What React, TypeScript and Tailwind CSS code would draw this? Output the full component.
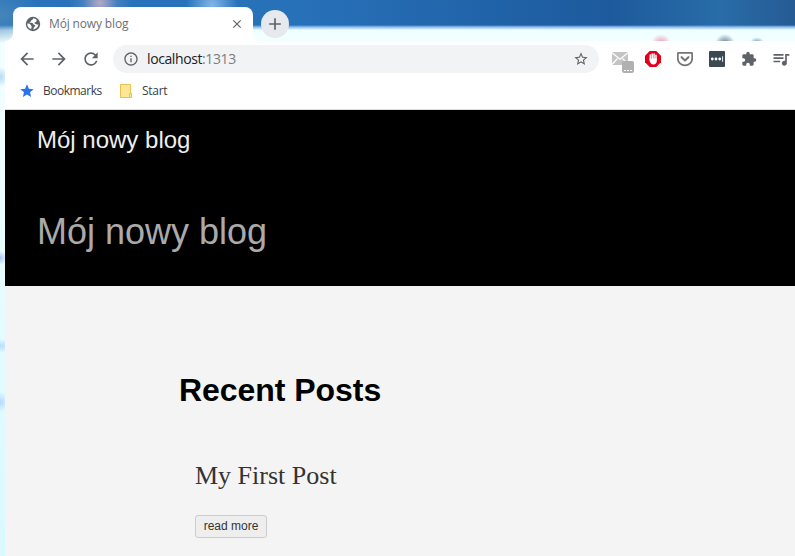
import React from "react";
import {
  MdAdd,
  MdArrowBack,
  MdArrowForward,
  MdClose,
  MdExtension,
  MdInfoOutline,
  MdMail,
  MdQueueMusic,
  MdRefresh,
  MdStar,
  MdStarBorder,
} from "react-icons/md";

function GlobeIcon() {
  return (
    <svg width="16" height="16" viewBox="0 0 16 16">
      <circle cx="8" cy="8" r="7.2" fill="#5f6368" />
      <path
        d="M8.6 2.3c-1 .5-.6 1.5-1.8 1.7-.6.1-.6 1-.9 1.4-.4.6-1.3.3-1.3.9 0 .8 1.5.4 2.7.6 1.1.2.8 1.6 1.9 1.8.9.2 1.3.6 1 1.3-.3.9-1.2.8-1.5 1.9-.2.7-.3 1.3-1 1.5A5.6 5.6 0 0 0 13.5 8.6c-1 0-1.3.2-2.1-.4-.7-.5-1.8-.2-1.9-1.2-.1-.9 1.1-.9 1.7-1.3.5-.4.5-1.200.2-2.100a5.600 5.600 0 0 0-2.800-1.300z"
        fill="#fff"
      />
      <path d="M2.3 7.6c1.400.100 3.100.300 3.400 1.500.2.900 1.100 1 1 1.900-.100.800-.600.900-.600 2.300A5.600 5.600 0 0 1 2.300 7.600z" fill="#fff" />
    </svg>
  );
}

function TabStrip() {
  return (
    <div className="flex h-[41px] items-end pl-2">
      <div className="relative flex h-[34px] w-[240px] items-center rounded-t-lg bg-white pl-3 pr-[9px]">
        <svg className="absolute -left-2 bottom-0" width="8" height="8" viewBox="0 0 8 8">
          <path d="M8 0v8H0a8 8 0 0 0 8-8z" fill="#fff" />
        </svg>
        <svg className="absolute -right-2 bottom-0" width="8" height="8" viewBox="0 0 8 8">
          <path d="M0 0v8h8a8 8 0 0 1-8-8z" fill="#fff" />
        </svg>
        <GlobeIcon />
        <span className="ml-2 whitespace-nowrap text-[12px] leading-4 tracking-[-0.15px] text-[#6d7074]">
          Mój nowy blog
        </span>
        <MdClose className="ml-auto size-[14px] text-[#5f6368]" />
      </div>
      <div className="mb-[3px] ml-2 flex size-7 items-center justify-center rounded-full bg-[#e6e9ed]">
        <MdAdd className="size-5 text-[#5f6368]" />
      </div>
    </div>
  );
}

function MailIcon() {
  return (
    <div className="relative size-6">
      <svg className="absolute -left-px top-[5px]" width="16" height="13" viewBox="0 0 16 13">
        <rect width="16" height="13" rx=".5" fill="#c4c4c4" />
        <path d="M0 .8 8 7.200l8-6.400M0 12.500l5.500-6M16 12.500l-5.500-6" fill="none" stroke="#fff" strokeWidth="1.200" />
      </svg>
      <div className="absolute left-[9px] top-[14px] flex h-3 w-3 items-end justify-center rounded-[2px] bg-[#b0b0b0] pb-[2px]">
        <div className="flex gap-px">
          <i className="h-px w-[2px] bg-white" />
          <i className="h-px w-[2px] bg-white" />
          <i className="h-px w-[2px] bg-white" />
        </div>
      </div>
    </div>
  );
}

function Toolbar() {
  return (
    <div className="flex h-9 items-center bg-white pl-3 text-[#5f6368]">
      <MdArrowBack className="size-5" />
      <MdArrowForward className="ml-3 size-5" />
      <MdRefresh className="ml-3 size-5" />
      <div className="ml-3 flex h-7 w-[486px] items-center rounded-full bg-[#f1f3f4] pl-[10px] pr-[10px]">
        <MdInfoOutline className="size-4" />
        <span className="ml-2 whitespace-nowrap text-[14px] leading-5 tracking-[-0.4px] text-[#202124]">
          localhost<span className="text-[#7a7e82]">:1313</span>
        </span>
        <MdStarBorder className="ml-auto size-4" />
      </div>
      <div className="ml-[14px] flex items-center">
        <MailIcon />
        <svg className="ml-2" width="16" height="16" viewBox="0 0 16 16">
          <path d="M4.7 0h6.6L16 4.7v6.6L11.3 16H4.7L0 11.3V4.7z" fill="#e0001b" />
          <path
            d="M5.300 4.100v4.400M7.200 2.900v5.600M9.100 3.100v5.400M11 4.300v4.600"
            stroke="#fff"
            strokeWidth="1.500"
            strokeLinecap="round"
          />
          <path d="M4.550 7.500h7.200v2.400c0 2-1.200 3.500-3.400 3.500-1.700 0-2.600-.900-3.300-2.300l-.500-1.300z" fill="#fff" />
        </svg>
        <svg className="ml-4" width="16" height="16" viewBox="0 0 16 16" fill="none" stroke="#767676">
          <path d="M1.500 1.800h13c.4 0 .7.3.7.7v5a7.200 6.800 0 0 1-14.400 0v-5c0-.4.3-.7.7-.7z" strokeWidth="1.800" />
          <path d="M4.600 6.200 8 9.400l3.400-3.200" strokeWidth="2.100" strokeLinecap="round" strokeLinejoin="round" />
        </svg>
        <svg className="ml-4" width="16" height="16" viewBox="0 0 16 16" fill="#fff">
          <rect width="16" height="16" rx="1" fill="#3b4953" />
          <circle cx="3.300" cy="8" r="1.400" />
          <circle cx="7" cy="8" r="1.400" />
          <circle cx="10.700" cy="8" r="1.400" />
          <path d="M13.200 5.200h.900v5.600h-.900z" />
        </svg>
        <MdExtension className="ml-4 size-4" />
        <MdQueueMusic className="ml-[14px] size-5 shrink-0" />
      </div>
    </div>
  );
}

function BookmarksBar() {
  return (
    <div className="flex h-8 items-center bg-white pb-[5px] pl-[14px] text-[12px] text-[#3c4043]">
      <MdStar className="size-4 text-[#2a73e8]" />
      <span className="ml-2 w-[59px] whitespace-nowrap tracking-[-0.5px]">Bookmarks</span>
      <svg className="ml-[18px]" width="12" height="14" viewBox="0 0 12 14">
        <path d="M.5.5h10v9h1v4H.5z" fill="#ffe694" stroke="#e6c351" />
        <path d="M9.500 13V9.500h2" fill="none" stroke="#e6c351" />
      </svg>
      <span className="ml-[10px] tracking-[-0.3px]">Start</span>
    </div>
  );
}

export default function App() {
  return (
    <div className="flex h-[556px] w-[795px] overflow-hidden bg-[radial-gradient(circle_at_100px_3px,#b4abc4_0px,#8298c855_17px,transparent_32px),radial-gradient(circle_at_212px_5px,#82b5e8_0px,transparent_26px),radial-gradient(ellipse_at_0px_15px,#4685b9_0px,transparent_42px),radial-gradient(circle_at_661px_44px,#ee8fac_0px,transparent_10px),radial-gradient(circle_at_725px_44px,#516d89_0px,transparent_10px),radial-gradient(ellipse_at_757px_42px,#789fc9_0px,transparent_7px),radial-gradient(circle_at_0px_77px,#b4daf4_0px,transparent_10px),radial-gradient(circle_at_0px_258px,#a6c7f1_0px,transparent_7px),radial-gradient(ellipse_at_0px_346px,#b8ddff_0px,transparent_16px),radial-gradient(circle_at_0px_402px,#b4d9ff_0px,transparent_10px),linear-gradient(180deg,transparent_25px,#8cbcf0_27px,#efffff_30px,#f3ffff_44px,#d9f9ff_100%),linear-gradient(90deg,#2773bc_0px,#2771b9_300px,#1d5a9d_610px,#286ca8_720px,#265b94_795px)] font-['Open_Sans','Noto_Sans',sans-serif]">
      <div className="ml-[5px] flex min-w-0 flex-1 flex-col">
        <TabStrip />
        <Toolbar />
        <BookmarksBar />
        <div className="h-px shrink-0 bg-[#dadce0]" />
        <main className="flex-1 bg-[#f4f4f4] font-['Liberation_Sans',Arial,sans-serif]">
          <header className="h-44 bg-black pl-8 pt-[14px]">
            <div className="text-[24px] leading-8 text-[#eee]">Mój nowy blog</div>
            <h1 className="mt-[53px] text-[36px] leading-[45px] text-[#aaa]">Mój nowy blog</h1>
          </header>
          <section className="pl-[174px] pt-[84px]">
            <h2 className="text-[32px] font-bold leading-10 tracking-[-0.05px] text-black">Recent Posts</h2>
            <article className="pl-4 pt-[50px]">
              <h3 className="font-['Liberation_Serif',serif] text-[26px] leading-8 text-[#333]">
                My First Post
              </h3>
              <button className="mt-[23px] flex h-[23px] w-[72px] items-center justify-center rounded-[3px] border border-[#ccc] bg-[#eee] pb-px text-[12px] leading-4 text-[#333]">
                read more
              </button>
            </article>
          </section>
        </main>
      </div>
    </div>
  );
}
